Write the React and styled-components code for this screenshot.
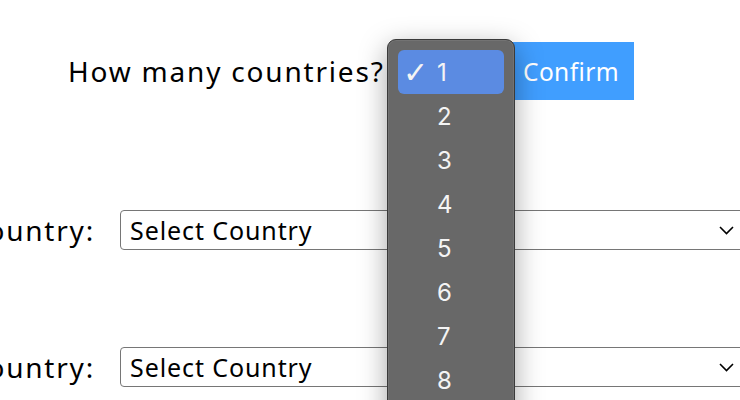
import React from 'react';
import styled, { createGlobalStyle } from 'styled-components';

const GlobalStyle = createGlobalStyle`
  html, body {
    margin: 0;
    background: #fff;
    overflow: hidden;
  }
  body {
    font-family: 'Noto Sans', 'Liberation Sans', sans-serif;
    color: #000;
  }
`;

const Page = styled.div`
  width: 740px;
  height: 400px;
  padding-top: 42px;
  box-sizing: border-box;
  overflow: hidden;
`;

const QuestionRow = styled.div`
  display: flex;
  align-items: center;
  height: 58px;
  margin-left: 68px;
`;

const Question = styled.span`
  width: 320px;
  font-size: 28px;
  letter-spacing: 1.8px;
  white-space: nowrap;
`;

const CountWrap = styled.div`
  position: relative;
  width: 118px;
  height: 40px;
  margin-left: 2px;
`;

const Popup = styled.div`
  position: absolute;
  top: -12px;
  left: -3px;
  width: 128px;
  height: 420px;
  background: #686868;
  border: 1px solid #3a3a3a;
  border-radius: 9px;
  box-shadow: 0 0 0 1px rgba(255, 255, 255, 0.08) inset, 0 8px 28px rgba(0, 0, 0, 0.35);
  padding: 10px 10px 0;
  box-sizing: border-box;
  z-index: 2;
`;

const Option = styled.div`
  display: flex;
  align-items: center;
  height: 44px;
  border-radius: 6px;
  background: ${(p) => (p.$active ? '#5b8be2' : 'transparent')};
  color: #f4f4f4;
  font-family: 'Inter', 'Noto Sans', sans-serif;
  font-size: 24px;
  padding-left: 39px;
  position: relative;
`;

const Check = styled.span`
  position: absolute;
  left: 5px;
  top: 50%;
  transform: translateY(-50%);
  font-family: 'DejaVu Sans', sans-serif;
  font-size: 30px;
  font-weight: 300;
`;

const ConfirmButton = styled.button`
  height: 58px;
  padding: 0 15px;
  border: none;
  background: #409eff;
  color: #fff;
  font-family: 'Noto Sans', 'Liberation Sans', sans-serif;
  font-size: 24.5px;
  letter-spacing: 0.4px;
  cursor: pointer;
`;

const CountryRow = styled.div`
  display: flex;
  align-items: center;
  gap: 25px;
  margin-left: -45px;
  margin-top: ${(p) => p.$top}px;
`;

const Label = styled.span`
  flex: none;
  width: 140px;
  text-align: right;
  font-size: 28px;
  letter-spacing: 1.8px;
  white-space: nowrap;
`;

const SelectBox = styled.div`
  flex: none;
  display: flex;
  align-items: center;
  justify-content: space-between;
  width: 630px;
  height: 40px;
  box-sizing: border-box;
  border: 1px solid #767676;
  border-radius: 4px;
  padding: 0 15px 0 9px;
  font-size: 25px;
  letter-spacing: 0.9px;
  background: #fff;
`;

const Chevron = () => (
  <svg width="15" height="9" viewBox="0 0 15 9" fill="none">
    <path d="M1 1l6.5 6.5L14 1" stroke="#000" strokeWidth="1.6" />
  </svg>
);

export default function App() {
  const counts = [1, 2, 3, 4, 5, 6, 7, 8];
  return (
    <Page>
      <GlobalStyle />
      <QuestionRow>
        <Question>How many countries?</Question>
        <CountWrap>
          <Popup>
            {counts.map((n) => (
              <Option key={n} $active={n === 1}>
                {n === 1 && <Check>✓</Check>}
                {n}
              </Option>
            ))}
          </Popup>
        </CountWrap>
        <ConfirmButton>Confirm</ConfirmButton>
      </QuestionRow>
      <CountryRow $top={110}>
        <Label>Country:</Label>
        <SelectBox>
          Select Country
          <Chevron />
        </SelectBox>
      </CountryRow>
      <CountryRow $top={97}>
        <Label>Country:</Label>
        <SelectBox>
          Select Country
          <Chevron />
        </SelectBox>
      </CountryRow>
    </Page>
  );
}
